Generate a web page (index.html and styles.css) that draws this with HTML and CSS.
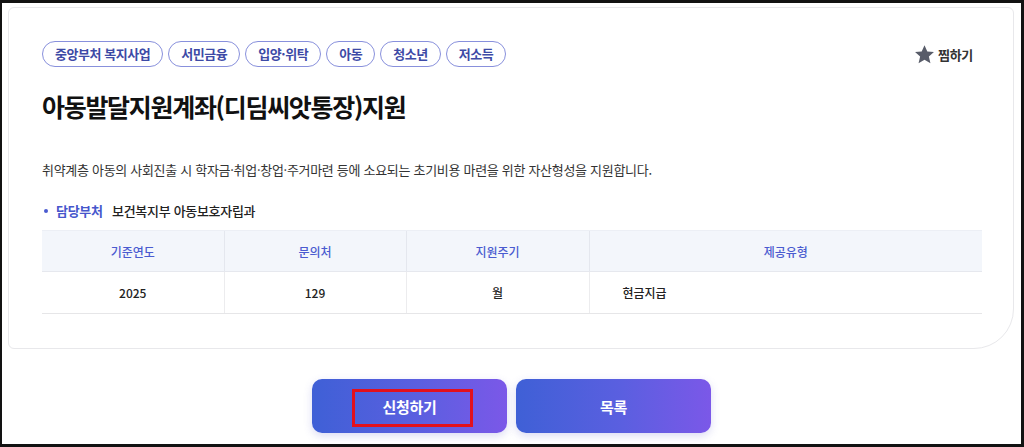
FILE: index.html
```html
<!DOCTYPE html>
<html lang="ko">
<head>
<meta charset="utf-8">
<title>아동발달지원계좌(디딤씨앗통장)지원</title>
<link rel="stylesheet" href="styles.css">
</head>
<body>
<div class="frame">
  <section class="card">
    <div class="top-row">
      <ul class="tags">
        <li class="tag">중앙부처 복지사업</li>
        <li class="tag">서민금융</li>
        <li class="tag">입양·위탁</li>
        <li class="tag">아동</li>
        <li class="tag">청소년</li>
        <li class="tag">저소득</li>
      </ul>
      <button class="fav" type="button">
        <svg class="star" viewBox="0 0 24 24" width="21" height="21" aria-hidden="true"><path d="M12 1.5l3.2 7 7.6.7-5.8 5.1 1.8 7.6L12 17.9l-6.8 4 1.8-7.6-5.8-5.1 7.6-.7z" fill="#585c69"/></svg>
        <span>찜하기</span>
      </button>
    </div>
    <h1 class="title">아동발달지원계좌(디딤씨앗통장)지원</h1>
    <p class="desc">취약계층 아동의 사회진출 시 학자금·취업·창업·주거마련 등에 소요되는 초기비용 마련을 위한 자산형성을 지원합니다.</p>
    <div class="dept"><span class="dept-label">담당부처</span><span class="dept-value">보건복지부 아동보호자립과</span></div>
    <table class="info">
      <colgroup><col class="c1"><col class="c2"><col class="c3"><col class="c4"></colgroup>
      <thead>
        <tr><th>기준연도</th><th>문의처</th><th>지원주기</th><th>제공유형</th></tr>
      </thead>
      <tbody>
        <tr><td>2025</td><td>129</td><td>월</td><td class="left">현금지급</td></tr>
      </tbody>
    </table>
  </section>
  <div class="actions">
    <button class="btn" type="button">신청하기<span class="mark"></span></button>
    <button class="btn" type="button">목록</button>
  </div>
</div>
</body>
</html>
```

FILE: styles.css
```css
* { box-sizing: border-box; }
html, body { margin: 0; padding: 0; background: #fff; }
body {
  font-family: "Noto Sans CJK KR", "Noto Sans", sans-serif;
  color: #222;
}
.frame {
  width: 1024px;
  height: 447px;
  border: 3px solid #121212;
  border-left-width: 2px;
  padding: 4px 7px 0 6px;
  background: #fff;
  overflow: hidden;
}
.card {
  border: 1px solid #e8e8eb;
  border-radius: 6px 6px 40px 6px;
  padding: 33px 31px 34px 33px;
  background: #fff;
}
.top-row {
  display: flex;
  justify-content: space-between;
  align-items: center;
}
.tags {
  display: flex;
  gap: 5px;
  list-style: none;
  margin: 0;
  padding: 0;
}
.tag {
  height: 26px;
  border: 1px solid #8890dc;
  border-radius: 13px;
  padding: 0 12px;
  font-size: 13px;
  line-height: 24px;
  font-weight: 700;
  color: #3d4aa6;
  letter-spacing: -0.45px;
  white-space: nowrap;
}
.fav {
  display: flex;
  align-items: center;
  gap: 3px;
  border: 0;
  background: none;
  padding: 0;
  margin-right: 9px;
  font-family: inherit;
  font-size: 13px;
  font-weight: 700;
  color: #333;
  letter-spacing: -0.3px;
}
.title {
  margin: 23px 0 0;
  font-size: 25px;
  line-height: 33px;
  font-weight: 700;
  color: #111;
  letter-spacing: -1.3px;
}
.desc {
  margin: 37px 0 0;
  font-size: 13px;
  line-height: 20px;
  color: #333;
  letter-spacing: -0.3px;
}
.dept {
  margin-top: 21px;
  display: flex;
  font-size: 13px;
  line-height: 20px;
  font-weight: 500;
  letter-spacing: -0.3px;
}
.dept-label {
  color: #4656cc;
  font-weight: 700;
  display: flex;
  align-items: center;
  width: 70px;
}
.dept-label::before {
  content: "";
  width: 4px;
  height: 4px;
  border-radius: 50%;
  background: #4a5bd0;
  margin: 0 8px 0 2px;
}
.dept-value { color: #222; }
.info {
  margin-top: 9px;
  width: 100%;
  border-collapse: collapse;
  table-layout: fixed;
  font-size: 12px;
}
.c1 { width: 182px; }
.c2 { width: 182px; }
.c3 { width: 183px; }
.info th {
  height: 41px;
  background: #f3f6fb;
  color: #4a5bd0;
  font-weight: 500;
  border-top: 1px solid #eceff5;
  border-bottom: 1px solid #e6e8ee;
  border-left: 1px solid #e4e7ee;
  padding: 0;
}
.info td {
  height: 42px;
  text-align: center;
  color: #222;
  font-weight: 500;
  border-bottom: 1px solid #e6e6e8;
  border-left: 1px solid #ececee;
  padding: 0;
}
.info th:first-child, .info td:first-child { border-left: 0; }
.info td.left { text-align: left; padding-left: 33px; }
.actions {
  display: flex;
  justify-content: center;
  gap: 9px;
  margin-top: 30px;
  padding-left: 1px;
}
.btn {
  position: relative;
  width: 195px;
  height: 54px;
  border: 0;
  border-radius: 10px;
  background: linear-gradient(90deg, #3f60d6 0%, #5b5fe0 55%, #7b58e8 100%);
  box-shadow: 0 3px 8px rgba(90, 90, 200, 0.22);
  color: #fff;
  font-family: inherit;
  font-size: 15px;
  font-weight: 700;
  letter-spacing: -0.3px;
}
.mark {
  position: absolute;
  left: 40px;
  top: 10px;
  width: 121px;
  height: 38px;
  border: 3px solid #e3101c;
}
```
